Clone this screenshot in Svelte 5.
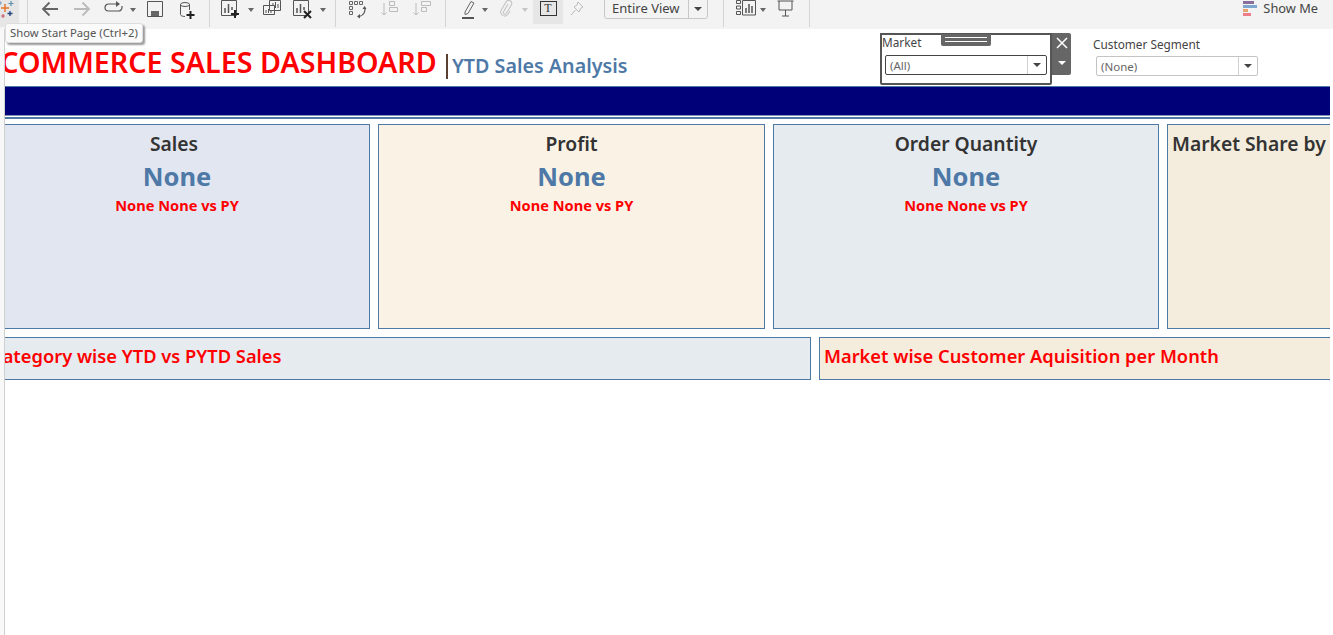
<script>
  const cards = [
    { title: "Sales", tone: "blue" },
    { title: "Profit", tone: "cream" },
    { title: "Order Quantity", tone: "grey" },
  ];
</script>

<div class="toolbar">
  <div class="start">
    <svg width="19" height="19" viewBox="0 0 19 19">
      <path d="M5 4v8M1 8h8" stroke="#e8762d" stroke-width="1.500" />
      <path d="M11 1v5M8.500 3.500h5" stroke="#5b8fb0" stroke-width="1.200" />
      <path d="M0 1v4M-2 3h4" stroke="#7a9cc0" stroke-width="1.200" />
      <path d="M10 11v5M7.500 13.500h5" stroke="#1f447a" stroke-width="1.300" />
      <path d="M3 14v4M1 16h4" stroke="#c7606a" stroke-width="1.200" />
    </svg>
  </div>
  <div class="sep first"></div>
  <div class="group g1">
    <svg class="ic" width="18" height="16" viewBox="0 0 18 16"><path d="M17 8H2M8.500 1.500 2 8l6.500 6.500" fill="none" stroke="#666" stroke-width="1.800" /></svg>
    <svg class="ic" width="18" height="16" viewBox="0 0 18 16"><path d="M1 8h15M9.500 1.500 16 8l-6.500 6.500" fill="none" stroke="#bbb" stroke-width="1.800" /></svg>
    <svg class="ic" width="20" height="14" viewBox="0 0 20 14"><path d="M13 3H4.500a3.500 3.500 0 0 0 0 7h10a3.500 3.500 0 0 0 3.500-3.500V5" fill="none" stroke="#555" stroke-width="1.200" /><path d="M12 0l4 3-4 3z" fill="#555" /></svg>
    <span class="caret"></span>
    <svg class="ic" width="16" height="16" viewBox="0 0 16 16"><path d="M.5.500h15v15H.5z" fill="none" stroke="#555" /><path d="M4 15v-5h8v5z" fill="#666" /></svg>
    <svg class="ic" width="16" height="19" viewBox="0 0 16 19"><ellipse cx="6" cy="3.500" rx="4.500" ry="2" fill="none" stroke="#555" /><path d="M1.500 3.500v10c0 1.200 2 2 4.500 2M10.500 3.500V9" fill="none" stroke="#555" /><path d="M11.500 10v8M7.500 14h8" stroke="#222" stroke-width="2" /></svg>
  </div>
  <div class="sep"></div>
  <div class="group g2">
    <svg class="ic" width="19" height="19" viewBox="0 0 19 19"><path d="M.5.500h15v15H.5z" fill="none" stroke="#555" /><path d="M4 8v5M7.500 4v9M11 7v3" stroke="#555" stroke-width="1.500" /><path d="M14 10v8M10 14h8" stroke="#222" stroke-width="2" /></svg>
    <span class="caret"></span>
    <svg class="ic" width="18" height="16" viewBox="0 0 18 16"><path d="M6.500.500h11v10h-11zM.5 5.500h11v9H.5z" fill="#f3f3f3" stroke="#555" /><path d="M3 10v3M5.500 9v4M8 11v2M10 3v2M12.500 2v6M15 4v4" stroke="#555" /></svg>
    <svg class="ic" width="19" height="19" viewBox="0 0 19 19"><path d="M.5.500h15v15H.5z" fill="none" stroke="#555" /><path d="M4 8v5M7.500 4v9M11 7v3" stroke="#555" stroke-width="1.500" /><path d="M11 11l7 7M18 11l-7 7" stroke="#222" stroke-width="2" /></svg>
    <span class="caret"></span>
  </div>
  <div class="sep"></div>
  <div class="group g3">
    <svg class="ic" width="18" height="18" viewBox="0 0 18 18"><path d="M.5.500h3v3h-3zM5.500.500h3v3h-3zM10.500.500h3v3h-3zM.5 5.500h3v3h-3zM.5 10.500h3v3h-3z" fill="none" stroke="#666" /><path d="M15.500 6c1.500 4-.5 8-5 9.500" fill="none" stroke="#555" stroke-width="1.200" /><path d="M13.500 8l2-3 2 3zM11 13l-3 2.500 3 2z" fill="#555" /></svg>
    <svg class="ic" width="18" height="17" viewBox="0 0 18 17"><path d="M3 2v12M.5 11.500 3 14l2.500-2.500" fill="none" stroke="#bbb" /><path d="M8.500.500h5v4h-5zM8.500 6.500h8v4h-8z" fill="none" stroke="#bbb" /></svg>
    <svg class="ic" width="18" height="17" viewBox="0 0 18 17"><path d="M3 2v12M.5 11.500 3 14l2.500-2.500" fill="none" stroke="#bbb" /><path d="M8.500.500h9v4h-9zM8.500 6.500h5v4h-5z" fill="none" stroke="#bbb" /></svg>
  </div>
  <div class="sep"></div>
  <div class="group g4">
    <svg class="ic" width="14" height="19" viewBox="0 0 14 19"><path d="M3 12 9 1.500l3 1.500-6 10.500-3 1z" fill="none" stroke="#666" /><path d="M0 18h12" stroke="#555" stroke-width="2" /></svg>
    <span class="caret"></span>
    <svg class="ic clip" width="14" height="17" viewBox="0 0 14 17"><path d="M9 4 4.500 12a1.600 1.600 0 0 0 2.800 1.500l5-8.500A3 3 0 0 0 7 2L2 10.500a4 4 0 0 0 6.800 4L11 11" fill="none" stroke="#c4c4c4" stroke-width="1.100" /></svg>
    <span class="caret light"></span>
    <div class="text-btn"><span class="t-box">T</span></div>
    <svg class="ic" width="14" height="17" viewBox="0 0 14 17"><path d="M8 1l5 5-2 1-2 4-5-5 3-2zM5.500 9 1 14" fill="none" stroke="#bbb" /></svg>
  </div>
  <div class="fit">
    <span class="fit-label">Entire View</span>
    <span class="fit-arrow"><span class="caret dark"></span></span>
  </div>
  <div class="sep"></div>
  <div class="group g5">
    <svg class="ic" width="20" height="16" viewBox="0 0 20 16"><path d="M.5.500h4v3h-4zM.5 6h4v3h-4zM.5 11.500h4v3h-4zM6.500.500h13v14.500h-13z" fill="none" stroke="#555" /><path d="M10 8v5M13 4v9M16 6v7" stroke="#555" stroke-width="1.500" /></svg>
    <span class="caret"></span>
    <svg class="ic" width="17" height="17" viewBox="0 0 17 17"><path d="M.5 1h16M2 1v9h13V1M8.500 10v6M5 16h7" fill="none" stroke="#555" /></svg>
  </div>
  <div class="sep"></div>
  <div class="show-me">
    <svg width="14" height="16" viewBox="0 0 14 16">
      <rect y="0" width="11" height="3" fill="#8a6f9d" />
      <rect y="4" width="14" height="3" fill="#7fa6cf" />
      <rect y="8" width="5" height="3" fill="#e9a56f" />
      <rect y="12" width="8" height="3" fill="#ee7d8a" />
    </svg>
    Show Me
  </div>
</div>

<div class="tooltip">Show Start Page (Ctrl+2)</div>

<div class="page">
  <div class="strip"></div>
  <main>
    <header>
      <h1>E-COMMERCE SALES DASHBOARD</h1>
      <span class="divider"></span>
      <h2>YTD Sales Analysis</h2>
      <div class="filter selected">
        <span class="filter-label">Market</span>
        <div class="select dark-border">
          <span>(All)</span>
          <span class="select-arrow"><span class="caret dark"></span></span>
        </div>
        <span class="grip"></span>
        <div class="filter-tools">
          <svg width="12" height="12" viewBox="0 0 12 12"><path d="M1 1l10 10M11 1 1 11" stroke="#fff" stroke-width="1.500" /></svg>
          <span class="caret white"></span>
        </div>
      </div>
      <div class="filter plain">
        <span class="filter-label">Customer Segment</span>
        <div class="select">
          <span>(None)</span>
          <span class="select-arrow"><span class="caret dark"></span></span>
        </div>
      </div>
    </header>

    <div class="navbar"></div>
    <div class="rule"></div>

    <section class="kpis">
      {#each cards as card}
        <div class="card {card.tone}">
          <div class="card-title">{card.title}</div>
          <div class="value">None</div>
          <div class="delta">None None vs PY</div>
        </div>
      {/each}
      <div class="card sand">
        <div class="card-title left">Market Share by Segment</div>
      </div>
    </section>

    <section class="lower">
      <div class="band grey"><span class="band-title cut">Category wise YTD vs PYTD Sales</span></div>
      <div class="band sand"><span class="band-title">Market wise Customer Aquisition per Month</span></div>
    </section>
  </main>
</div>

<style>
  :global(body) {
    margin: 0;
    background: #fff;
    overflow: hidden;
    font-family: "Noto Sans", sans-serif;
  }
  .toolbar {
    height: 29px;
    background: #f3f3f3;
    display: flex;
    align-items: flex-start;
    overflow: hidden;
    color: #444;
    font-size: 13px;
  }
  .start {
    width: 19px;
    height: 27px;
    background: #e6e6e6;
    overflow: hidden;
    flex: none;
  }
  .start svg {
    display: block;
    overflow: hidden;
  }
  .sep {
    width: 1px;
    height: 27px;
    background: #d4d4d4;
    flex: none;
  }
  .sep.first {
    margin-left: 8px;
  }
  .group {
    display: flex;
    align-items: flex-start;
    height: 27px;
    flex: none;
  }
  .ic {
    display: block;
    flex: none;
  }
  .g1 {
    width: 181px;
    padding-left: 13px;
    box-sizing: border-box;
  }
  .g1 .ic:nth-child(1) { margin: 1px 0 0 0; }
  .g1 .ic:nth-child(2) { margin: 1px 0 0 14px; }
  .g1 .ic:nth-child(3) { margin: 1px 0 0 13px; }
  .g1 .ic:nth-child(5) { margin: 1px 0 0 11px; }
  .g1 .ic:nth-child(6) { margin: 1px 0 0 16px; }
  .g1 .caret { margin: 8px 0 0 6px; }
  .g2 {
    width: 125px;
    padding-left: 11px;
    box-sizing: border-box;
  }
  .g2 .ic:nth-child(1) { margin-top: 0; }
  .g2 .ic:nth-child(3) { margin: 0 0 0 9px; }
  .g2 .ic:nth-child(4) { margin: 0 0 0 12px; }
  .g2 .caret { margin: 8px 0 0 8px; }
  .g3 {
    width: 109px;
    padding-left: 13px;
    box-sizing: border-box;
    gap: 14px;
  }
  .g3 .ic { margin-top: 1px; }
  .g4 {
    width: 158px;
    padding-left: 16px;
    box-sizing: border-box;
  }
  .g4 .caret { margin: 8px 0 0 6px; }
  .g4 .clip { margin-left: 11px; }
  .g4 .caret.light { margin-left: 9px; }
  .text-btn {
    width: 30px;
    height: 24px;
    margin-left: 5px;
    background: #e6e6e6;
    display: flex;
    justify-content: center;
  }
  .t-box {
    box-sizing: border-box;
    width: 17px;
    height: 15px;
    margin-top: 1px;
    border: 1px solid #333;
    font: 12px/13px "Liberation Serif", serif;
    text-align: center;
    color: #333;
  }
  .g4 .ic:last-child { margin: 1px 0 0 7px; }
  .caret {
    display: block;
    width: 0;
    height: 0;
    border: 3px solid transparent;
    border-top: 4px solid #666;
    border-bottom: 0;
    flex: none;
  }
  .caret.light { border-top-color: #c4c4c4; }
  .caret.dark { border: 4px solid transparent; border-top: 4px solid #444; border-bottom: 0; }
  .caret.white { border: 4px solid transparent; border-top: 4px solid #fff; border-bottom: 0; }
  .fit {
    flex: none;
    box-sizing: border-box;
    width: 104px;
    height: 20px;
    margin: -1px 15px 0 0;
    border: 1px solid #c8c8c8;
    border-radius: 0 0 3px 3px;
    display: flex;
    align-items: center;
    background: #f3f3f3;
  }
  .fit-label {
    flex: 1;
    padding: 0 0 2px 7px;
    font-size: 13px;
  }
  .fit-arrow {
    width: 18px;
    height: 100%;
    border-left: 1px solid #c8c8c8;
    display: flex;
    align-items: center;
    justify-content: center;
  }
  .g5 {
    width: 85px;
    padding-left: 12px;
    box-sizing: border-box;
  }
  .g5 .caret { margin: 8px 0 0 4px; }
  .g5 .ic:last-child { margin-left: 11px; }
  .show-me {
    margin-left: auto;
    margin-right: 15px;
    display: flex;
    align-items: flex-start;
    gap: 6px;
    font-size: 12.800px;
    line-height: 17px;
    color: #444;
  }
  .show-me svg { margin-top: 1px; }
  .tooltip {
    position: absolute;
    left: 5px;
    top: 23px;
    height: 18px;
    padding: 0 4px;
    font-size: 11.300px;
    line-height: 18px;
    color: #555;
    background: #fafafa;
    border: 1px solid #ddd;
    border-radius: 3px;
    box-shadow: 2px 2px 2px #999;
  }

  .page {
    display: flex;
    height: 606px;
  }
  .strip {
    width: 4px;
    flex: none;
    border-right: 1px solid #d0d0d0;
    background: #f8f8f8;
  }
  main {
    width: 1325px;
    flex: none;
    overflow: hidden;
    background: #fff;
  }
  header {
    height: 57px;
    display: flex;
    align-items: flex-start;
    position: relative;
  }
  h1 {
    flex: none;
    margin: 13px 0 0 -30px;
    width: 462px;
    font-size: 28.700px;
    line-height: 40px;
    font-weight: 600;
    color: #f00;
    white-space: nowrap;
  }
  .divider {
    flex: none;
    width: 2px;
    height: 25px;
    margin: 25px 4px 0 9px;
    background: #5a4030;
  }
  h2 {
    flex: none;
    margin: 23px 0 0 0;
    width: 428px;
    font-size: 19.700px;
    line-height: 27px;
    font-weight: 600;
    color: #4e79a7;
    white-space: nowrap;
  }
  .filter {
    flex: none;
    box-sizing: border-box;
    position: relative;
    font-size: 11.800px;
    color: #444;
  }
  .filter.selected {
    width: 172px;
    height: 52px;
    margin-top: 4px;
    border: 2px solid #555;
    border-radius: 0 0 2px 2px;
  }
  .filter.plain {
    width: 166px;
    margin: 8px 0 0 41px;
  }
  .filter-label {
    display: block;
    line-height: 15px;
  }
  .select {
    box-sizing: border-box;
    display: flex;
    align-items: center;
    height: 20px;
    border: 1px solid #c4c4c4;
    border-radius: 2px;
    color: #666;
    font-size: 11.500px;
    padding-left: 4px;
    background: #fff;
  }
  .select > span:first-child { flex: 1; }
  .plain .select { width: 162px; margin: 4px 0 0 3px; }
  .dark-border {
    width: 162px;
    margin: 5px 0 0 3px;
    border-color: #444;
  }
  .select-arrow {
    width: 18px;
    height: 100%;
    border-left: 1px solid #d0d0d0;
    display: flex;
    align-items: center;
    justify-content: center;
  }
  .grip {
    position: absolute;
    left: 59px;
    top: -1px;
    width: 50px;
    height: 12px;
    box-sizing: border-box;
    background: #666;
    border-radius: 0 0 2px 2px;
    border-top: 3px solid #666;
  }
  .grip::after {
    content: "";
    display: block;
    margin: 0 4px;
    height: 3px;
    border-top: 1px solid #fff;
    border-bottom: 1px solid #fff;
  }
  .filter-tools {
    position: absolute;
    left: 170px;
    top: -2px;
    width: 19px;
    height: 42px;
    background: #666;
    border-radius: 0 2px 2px 0;
    display: flex;
    flex-direction: column;
    align-items: center;
    gap: 12px;
    padding-top: 4px;
    box-sizing: border-box;
  }
  .navbar {
    height: 28px;
    background: #000078;
    border-top: 1px solid #4e79a7;
    border-bottom: 1px solid #7f8fb5;
  }
  .rule {
    height: 2px;
    margin-top: 1px;
    background: #4e79a7;
  }
  .kpis {
    display: grid;
    grid-template-columns: 386px 387px 386px 386px;
    gap: 8px;
    margin: 5px 0 0 -21px;
    height: 205px;
  }
  .card {
    box-sizing: border-box;
    border: 1px solid #4e79a7;
    text-align: center;
    padding-top: 6px;
  }
  .card-title {
    font-size: 19.300px;
    line-height: 26px;
    font-weight: 600;
    color: #333;
    white-space: nowrap;
  }
  .card:first-child .card-title { padding-right: 6px; }
  .card-title.left {
    text-align: left;
    padding-left: 4px;
  }
  .value {
    margin-top: 1px;
    font-size: 25.500px;
    line-height: 36px;
    font-weight: 700;
    color: #4e79a7;
  }
  .delta {
    font-size: 14.600px;
    line-height: 20px;
    font-weight: 700;
    color: #f00;
    margin-top: 1px;
  }
  .blue { background: #e2e6f0; }
  .cream { background: #f9f2e5; }
  .grey { background: #e6ebf0; }
  .sand { background: #f4ecdc; }
  .lower {
    display: grid;
    grid-template-columns: 827px 540px;
    gap: 8px;
    margin: 8px 0 0 -21px;
    height: 43px;
  }
  .band {
    box-sizing: border-box;
    border: 1px solid #4e79a7;
    padding: 0 0 6px 4px;
    display: flex;
    align-items: center;
  }
  .band-title {
    font-size: 18.300px;
    font-weight: 600;
    color: #f00;
    white-space: nowrap;
  }
  .band-title.cut { margin-left: 2px; }
</style>
